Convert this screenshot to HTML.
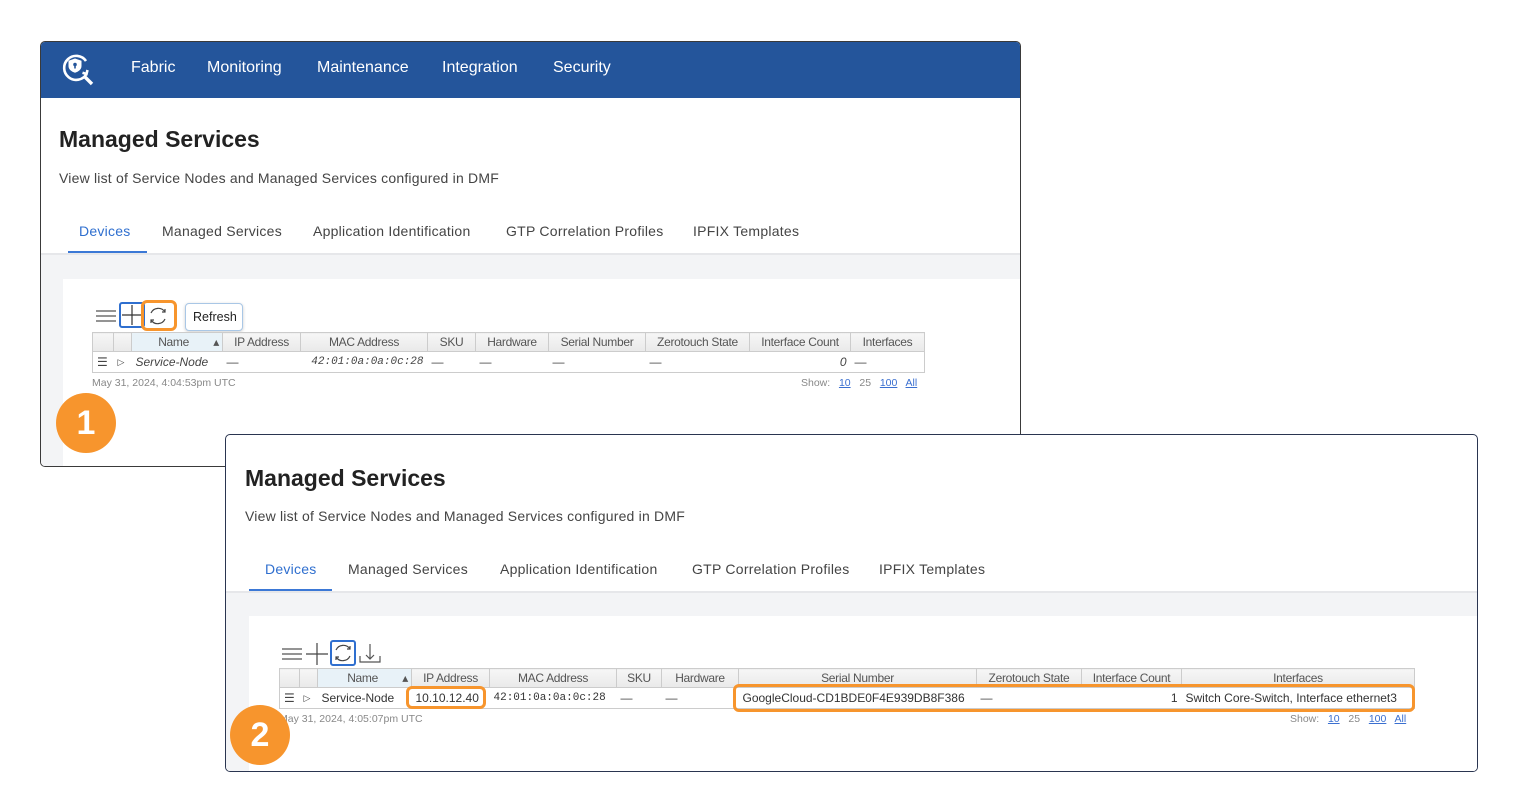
<!DOCTYPE html>
<html><head><meta charset="utf-8"><style>
*{box-sizing:border-box;margin:0;padding:0}
body{width:1517px;height:811px;background:#fff;position:relative;overflow:hidden;font-family:"Liberation Sans",sans-serif}
.a{position:absolute;white-space:nowrap}
.panel{position:absolute;border:1px solid #3a3a3a;border-radius:5px;overflow:hidden;background:#fff}
.hdr{position:absolute;left:0;top:0;right:0;height:56px;background:#24559b}
.nav{position:absolute;top:17px;color:#fff;font-size:16px}
.title{font-size:23px;font-weight:bold;color:#222}
.sub{font-size:14px;color:#444;letter-spacing:.2px}
.tab{font-size:14px;color:#444;letter-spacing:.25px}
.gray{position:absolute;left:0;right:0;bottom:0;background:#f3f4f6;border-top:2px solid #e6e7ea}
.card{position:absolute;background:#fff}
table{border-collapse:collapse;table-layout:fixed;font-size:12px;color:#555;position:absolute}
th{font-weight:normal;background:linear-gradient(#f6f6f6,#e9e9e9);border:1px solid #ccc;height:19px;padding:0 3px;text-align:center;overflow:hidden;white-space:nowrap;letter-spacing:-.3px}
td{height:21px;padding:0 4px;border-top:1px solid #ddd;white-space:nowrap;overflow:hidden;color:#444}
.tb{border:1px solid #ccc}
.mono{font-family:"Liberation Mono",monospace;font-size:11px}
.foot{font-size:10.5px;color:#888}
.lnk{color:#3a6fd0;text-decoration:underline}
.hl{position:absolute;border:3px solid #f7952d;border-radius:6px}
.badge{position:absolute;width:60px;height:60px;border-radius:50%;background:#f7952d;color:#fff;font-size:34px;font-weight:bold;text-align:center;line-height:60px}
</style></head><body>

<!-- PANEL 1 -->
<div class="panel" style="left:40px;top:41px;width:981px;height:426px">
  <div class="hdr">
    <svg class="a" style="left:20px;top:10px" width="36" height="34" viewBox="0 0 36 34" fill="none" stroke="#fff" stroke-width="2.6">
      <path d="M25 9A12 12 0 1 0 25.5 22"/><path d="M26.5 18l-1 4-4-1.2"/>
      <path d="M23 24l8 8" stroke-width="3.4"/>
      <path d="M14 6.5l6.5 2.2v5.3c0 3.4-3 5.6-6.5 6.8-3.5-1.2-6.5-3.4-6.5-6.8V8.7z" fill="#fff" stroke="none"/>
      <circle cx="14" cy="12.5" r="1.8" fill="#24559b" stroke="none"/>
      <path d="M14 13v3.5" stroke="#24559b" stroke-width="1.6"/>
    </svg>
    <div class="nav" style="left:90px">Fabric</div>
    <div class="nav" style="left:166px">Monitoring</div>
    <div class="nav" style="left:276px">Maintenance</div>
    <div class="nav" style="left:401px">Integration</div>
    <div class="nav" style="left:512px">Security</div>
  </div>
  <div class="a title" style="left:18px;top:84px">Managed Services</div>
  <div class="a sub" style="left:18px;top:128px">View list of Service Nodes and Managed Services configured in DMF</div>
  <div class="a tab" style="left:38px;top:181px;color:#2f6fcf">Devices</div>
  <div class="a" style="left:27px;top:209px;width:79px;height:2px;background:#3b78d6;z-index:2"></div>
  <div class="a tab" style="left:121px;top:181px">Managed Services</div>
  <div class="a tab" style="left:272px;top:181px">Application Identification</div>
  <div class="a tab" style="left:465px;top:181px">GTP Correlation Profiles</div>
  <div class="a tab" style="left:652px;top:181px">IPFIX Templates</div>
  <div class="gray" style="top:211px"></div>
  <div class="card" style="left:22px;top:237px;right:0;bottom:0">
    <svg class="a" style="left:32px;top:29px" width="22" height="16" stroke="#555" stroke-width="1.2"><path d="M1 3h20M1 8h20M1 13h20"/></svg>
    <div class="a" style="left:56px;top:23px;width:26px;height:26px;border:2px solid #2f6fcf;border-radius:3px"></div>
    <svg class="a" style="left:59px;top:26px" width="20" height="20" stroke="#333" stroke-width="1.2"><path d="M10 0v20M0 10h20"/></svg>
    <svg class="a" style="left:84px;top:26px" width="22" height="22" fill="none" stroke="#444" stroke-width="1.2"><path d="M4 8A8 8 0 0 1 18 7"/><path d="M18 14A8 8 0 0 1 4 15"/><path d="M15 7h3V4M7 15H4v3"/></svg>
    <div class="a" style="left:122px;top:24px;width:58px;height:28px;border:1px solid #a9c7e6;border-radius:4px;background:#fff;box-shadow:0 1px 3px rgba(0,0,0,.2);font-size:12.5px;line-height:26px;padding-left:7px;color:#222">Refresh</div>
    <table class="tb" style="left:29px;top:53px;width:832px">
      <colgroup><col style="width:21px"><col style="width:18px"><col style="width:91px"><col style="width:78px"><col style="width:127px"><col style="width:48px"><col style="width:73px"><col style="width:97px"><col style="width:104px"><col style="width:101px"><col style="width:74px"></colgroup>
      <tr><th></th><th></th><th style="background:#e8f2f8;text-align:right">Name&nbsp;&nbsp;&nbsp;&nbsp;&nbsp;&nbsp;&nbsp;&nbsp;▴</th><th>IP Address</th><th>MAC Address</th><th>SKU</th><th>Hardware</th><th>Serial Number</th><th>Zerotouch State</th><th>Interface Count</th><th>Interfaces</th></tr>
      <tr><td>☰</td><td style="font-size:9px">▷</td><td style="font-style:italic">Service-Node</td><td>—</td><td class="mono" style="font-style:italic;text-align:right">42:01:0a:0a:0c:28</td><td>—</td><td>—</td><td>—</td><td>—</td><td style="text-align:right;font-style:italic">0</td><td>—</td></tr>
    </table>
    <div class="a foot" style="left:29px;top:98px">May 31, 2024, 4:04:53pm UTC</div>
    <div class="a foot" style="left:738px;top:98px">Show:&nbsp;&nbsp; <span class="lnk">10</span>&nbsp;&nbsp; 25&nbsp;&nbsp; <span class="lnk">100</span>&nbsp;&nbsp; <span class="lnk">All</span></div>
  </div>
</div>
<div class="hl" style="left:141px;top:300px;width:36px;height:31px"></div>
<div class="badge" style="left:56px;top:393px">1</div>

<!-- PANEL 2 -->
<div class="panel" style="left:225px;top:434px;width:1253px;height:338px;border-color:#2a3550">
  <div class="a title" style="left:19px;top:30px">Managed Services</div>
  <div class="a sub" style="left:19px;top:73px">View list of Service Nodes and Managed Services configured in DMF</div>
  <div class="a tab" style="left:39px;top:126px;color:#2f6fcf">Devices</div>
  <div class="a" style="left:23px;top:154px;width:83px;height:2px;background:#3b78d6;z-index:2"></div>
  <div class="a tab" style="left:122px;top:126px">Managed Services</div>
  <div class="a tab" style="left:274px;top:126px">Application Identification</div>
  <div class="a tab" style="left:466px;top:126px">GTP Correlation Profiles</div>
  <div class="a tab" style="left:653px;top:126px">IPFIX Templates</div>
  <div class="gray" style="top:156px"></div>
  <div class="card" style="left:23px;top:181px;right:0;bottom:0">
    <svg class="a" style="left:33px;top:31px" width="20" height="14" stroke="#555" stroke-width="1.2"><path d="M0 2h20M0 7h20M0 12h20"/></svg>
    <svg class="a" style="left:57px;top:27px" width="22" height="22" stroke="#444" stroke-width="1.2"><path d="M11 0v22M0 11h22"/></svg>
    <div class="a" style="left:81px;top:24px;width:26px;height:26px;border:2px solid #2f6fcf;border-radius:3px"></div>
    <svg class="a" style="left:84px;top:27px" width="20" height="20" fill="none" stroke="#444" stroke-width="1.2"><path d="M3 7A8 8 0 0 1 17 6"/><path d="M17 13A8 8 0 0 1 3 14"/><path d="M14 6h3V3M6 14H3v3"/></svg>
    <svg class="a" style="left:110px;top:28px" width="22" height="20" fill="none" stroke="#555" stroke-width="1.2"><path d="M11 0v15M7 11l4 4 4-4M1 12v6h20v-6"/></svg>
    <table class="tb" style="left:30px;top:52px;width:1135px">
      <colgroup><col style="width:20px"><col style="width:18px"><col style="width:94px"><col style="width:78px"><col style="width:127px"><col style="width:45px"><col style="width:77px"><col style="width:238px"><col style="width:105px"><col style="width:100px"><col style="width:233px"></colgroup>
      <tr><th></th><th></th><th style="background:#e8f2f8;text-align:right">Name&nbsp;&nbsp;&nbsp;&nbsp;&nbsp;&nbsp;&nbsp;&nbsp;▴</th><th>IP Address</th><th>MAC Address</th><th>SKU</th><th>Hardware</th><th>Serial Number</th><th>Zerotouch State</th><th>Interface Count</th><th>Interfaces</th></tr>
      <tr><td>☰</td><td style="font-size:9px">▷</td><td style="color:#333">Service-Node</td><td style="color:#333">10.10.12.40</td><td class="mono" style="color:#333">42:01:0a:0a:0c:28</td><td>—</td><td>—</td><td style="color:#333">GoogleCloud-CD1BDE0F4E939DB8F386</td><td>—</td><td style="text-align:right;color:#333">1</td><td style="color:#333">Switch Core-Switch, Interface ethernet3</td></tr>
    </table>
    <div class="a foot" style="left:30px;top:97px">May 31, 2024, 4:05:07pm UTC</div>
    <div class="a foot" style="left:1041px;top:97px">Show:&nbsp;&nbsp; <span class="lnk">10</span>&nbsp;&nbsp; 25&nbsp;&nbsp; <span class="lnk">100</span>&nbsp;&nbsp; <span class="lnk">All</span></div>
  </div>
</div>
<div class="hl" style="left:406px;top:686px;width:80px;height:23px"></div>
<div class="hl" style="left:733px;top:684px;width:682px;height:28px"></div>
<div class="badge" style="left:230px;top:705px">2</div>
</body></html>
